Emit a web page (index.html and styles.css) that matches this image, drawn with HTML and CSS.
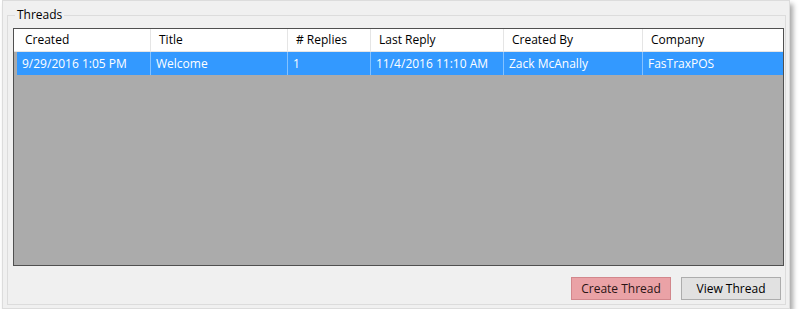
FILE: index.html
```html
<!DOCTYPE html>
<html lang="en">
<head>
  <meta charset="UTF-8">
  <title>Threads</title>
  <link rel="stylesheet" href="styles.css">
</head>
<body>
  <div class="window">
    <fieldset class="group">
      <legend>Threads</legend>

      <div class="list">
        <div class="list-header">
          <div class="col">Created</div>
          <div class="col">Title</div>
          <div class="col"># Replies</div>
          <div class="col">Last Reply</div>
          <div class="col">Created By</div>
          <div class="col">Company</div>
        </div>
        <div class="list-row selected">
          <div class="cell">9/29/2016 1:05 PM</div>
          <div class="cell">Welcome</div>
          <div class="cell">1</div>
          <div class="cell">11/4/2016 11:10 AM</div>
          <div class="cell">Zack McAnally</div>
          <div class="cell">FasTraxPOS</div>
        </div>
      </div>

      <div class="actions">
        <button type="button" class="btn btn-create">Create Thread</button>
        <button type="button" class="btn">View Thread</button>
      </div>
    </fieldset>
  </div>
</body>
</html>
```

FILE: styles.css
```css
body {
  margin: 0;
  padding: 0;
  background-color: #ffffff;
  font-family: 'Open Sans', 'Liberation Sans', sans-serif;
  font-size: 12px;
  color: #000;
}

.window {
  box-sizing: border-box;
  width: 788px;
  height: 309px;
  margin-left: 2px;
  padding: 7px 3px 3px 4px;
  background-color: #f0f0f0;
  border: 1px solid #dcdcdc;
  box-shadow: 3px 4px 5px rgba(0, 0, 0, 0.35);
}

.group {
  margin: 0;
  padding: 6px 1px 4px 5px;
  border: 1px solid #dcdcdc;
  min-width: 0;
}

.group legend {
  margin-left: 2px;
  padding: 0 2px;
  line-height: 14px;
}

.list {
  box-sizing: border-box;
  height: 238px;
  border: 1px solid #505050;
  background-color: #ababab;
}

.list-header,
.list-row {
  display: grid;
  grid-template-columns: 137px 137px 83px 133px 139px 1fr;
}

.list-header {
  height: 23px;
  background-color: #ffffff;
  border-bottom: 1px solid #e5e5e5;
  box-sizing: border-box;
  line-height: 22px;
}

.list-header .col {
  padding-left: 8px;
  border-right: 1px solid #e5e5e5;
  white-space: nowrap;
}

.list-header .col:first-child {
  padding-left: 11px;
}

.list-header .col:last-child {
  border-right: none;
}

.list-row {
  height: 23px;
  line-height: 23px;
  margin-left: 3px;
  grid-template-columns: 134px 137px 83px 133px 139px 1fr;
}

.list-row .cell {
  padding-left: 5px;
  border-right: 1px solid rgba(255, 255, 255, 0.4);
  white-space: nowrap;
}

.list-row .cell:last-child {
  border-right: none;
}

.list-row.selected {
  background-color: #3399ff;
  color: #ffffff;
}

.actions {
  display: flex;
  justify-content: flex-end;
  gap: 10px;
  margin-top: 11px;
  padding-right: 3px;
}

.btn {
  box-sizing: border-box;
  width: 100px;
  height: 23px;
  margin: 0;
  padding: 0;
  font-family: inherit;
  font-size: 12px;
  color: #000;
  background-color: #e1e1e1;
  border: 1px solid #adadad;
}

.btn-create {
  background-color: #eaa2a6;
  border-color: #d2878c;
  color: #2a1414;
}
```
